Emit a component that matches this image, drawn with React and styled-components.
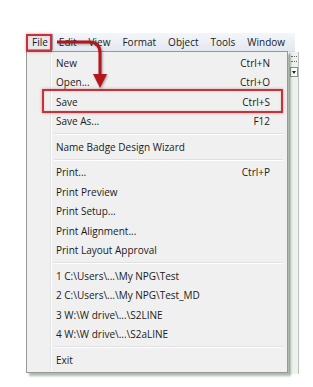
import styled, { createGlobalStyle } from "styled-components";

const GlobalStyle = createGlobalStyle`
  body {
    margin: 0;
    background: #ffffff;
    font-family: "Open Sans", "Noto Sans", sans-serif;
  }
`;

const Page = styled.div`
  width: 313px;
  height: 387px;
  padding: 33px 0 0 26px;
  box-sizing: border-box;
  overflow: hidden;
`;

const Window = styled.div`
  position: relative;
  width: 269px;
`;

const MenuBar = styled.div`
  display: flex;
  align-items: center;
  height: 18px;
  padding-left: 1px;
  background: linear-gradient(#f4f6f9, #e3e8ef);
  border-bottom: 1px solid #d5dbe3;
`;

const BarItem = styled.div`
  height: 16px;
  display: flex;
  align-items: center;
  padding: 0 ${(p) => (p.$pad ? p.$pad : 5)}px;
  font-size: 10px;
  color: #1b1b1b;
  box-sizing: border-box;
  border: 1px solid ${(p) => (p.$open ? "#9aa3ae" : "transparent")};
  background: ${(p) => (p.$open ? "#e6e9ee" : "transparent")};
`;

const Body = styled.div`
  display: flex;
  justify-content: flex-end;
  height: 322px;
`;

const SidePanel = styled.div`
  width: 8px;
  margin-right: -4px;
  background: #eef1ee;
  border-left: 1px solid #c9cfc9;
  border-right: 1px solid #b9c2b9;
  display: flex;
  flex-direction: column;
  gap: 5px;
  padding-top: 4px;
  overflow: hidden;
`;

const Scrap = styled.div`
  height: 4px;
  margin: 0 1px;
  border-top: 1px dotted #6a6a6a;
  border-bottom: 1px dotted #6a6a6a;
`;

const Combo = styled.div`
  height: 8px;
  border: 1px solid #8a8a8a;
  background: #fff;
  position: relative;

  &::after {
    content: "";
    position: absolute;
    left: 1px;
    top: 3px;
    border-left: 2px solid transparent;
    border-right: 2px solid transparent;
    border-top: 3px solid #222;
  }
`;

const Dropdown = styled.div`
  position: absolute;
  top: 18px;
  left: 0;
  width: 262px;
  box-sizing: border-box;
  padding: 1px 1px 2px 1px;
  background: #f0f0f0;
  border: 1px solid #979797;
  box-shadow: 3px 3px 2px rgba(110, 130, 110, 0.55);

  &::before {
    content: "";
    position: absolute;
    left: 23px;
    top: 2px;
    bottom: 2px;
    width: 1px;
    background: #e2e3e3;
    border-right: 1px solid #ffffff;
  }
`;

const Row = styled.div`
  display: flex;
  justify-content: space-between;
  align-items: center;
  height: 19.5px;
  padding: 0 16px 0 28px;
  font-size: 10px;
  color: #1a1a1a;
`;

const Shortcut = styled.span``;

const Separator = styled.div`
  height: 6px;
  display: flex;
  align-items: center;
  padding-left: 26px;
  padding-right: 3px;

  &::after {
    content: "";
    flex: 1;
    height: 1px;
    background: #e0e0e0;
    border-bottom: 1px solid #ffffff;
  }
`;

const RedBox = styled.div`
  position: absolute;
  left: ${(p) => p.$x}px;
  top: ${(p) => p.$y}px;
  width: ${(p) => p.$w}px;
  height: ${(p) => p.$h}px;
  box-sizing: border-box;
  border: 2px solid #c4333b;
  box-shadow: 0 0 3px rgba(196, 51, 59, 0.45), inset 0 0 2px rgba(196, 51, 59, 0.3);
  pointer-events: none;
`;

const Arrow = styled.svg`
  position: absolute;
  left: 0;
  top: 0;
  overflow: visible;
  filter: drop-shadow(1px 1px 1px rgba(0, 0, 0, 0.35));
  pointer-events: none;
`;

const bar = ["Edit", "View", "Format", "Object", "Tools", "Window"];

const groups = [
  [
    ["New", "Ctrl+N"],
    ["Open...", "Ctrl+O"],
    ["Save", "Ctrl+S"],
    ["Save As...", "F12"],
  ],
  [["Name Badge Design Wizard"]],
  [
    ["Print...", "Ctrl+P"],
    ["Print Preview"],
    ["Print Setup..."],
    ["Print Alignment..."],
    ["Print Layout Approval"],
  ],
  [
    ["1 C:\\Users\\...\\My NPG\\Test"],
    ["2 C:\\Users\\...\\My NPG\\Test_MD"],
    ["3 W:\\W drive\\...\\S2LINE"],
    ["4 W:\\W drive\\...\\S2aLINE"],
  ],
  [["Exit"]],
];

export default function App() {
  return (
    <Page>
      <GlobalStyle />
      <Window>
        <MenuBar>
          <BarItem $open $pad={4}>File</BarItem>
          {bar.map((b) => (
            <BarItem key={b}>{b}</BarItem>
          ))}
        </MenuBar>
        <Body>
          <SidePanel>
            <Scrap />
            <Combo />
          </SidePanel>
        </Body>

        <Dropdown>
          {groups.map((g, gi) => (
            <div key={gi}>
              {gi > 0 && <Separator />}
              {g.map(([label, key]) => (
                <Row key={label}>
                  <span>{label}</span>
                  {key && <Shortcut>{key}</Shortcut>}
                </Row>
              ))}
            </div>
          ))}
        </Dropdown>

        <RedBox $x={0} $y={1} $w={26} $h={18} />
        <RedBox $x={16} $y={56} $w={241} $h={24} />

        <Arrow width="269" height="80" viewBox="0 0 269 80">
          <path
            d="M31 9 L63 9 Q74 9 74 20 L74 43"
            fill="none"
            stroke="#b5161c"
            strokeWidth="3"
          />
          <polygon points="67,41 81,41 74,55" fill="#b5161c" />
        </Arrow>
      </Window>
    </Page>
  );
}
